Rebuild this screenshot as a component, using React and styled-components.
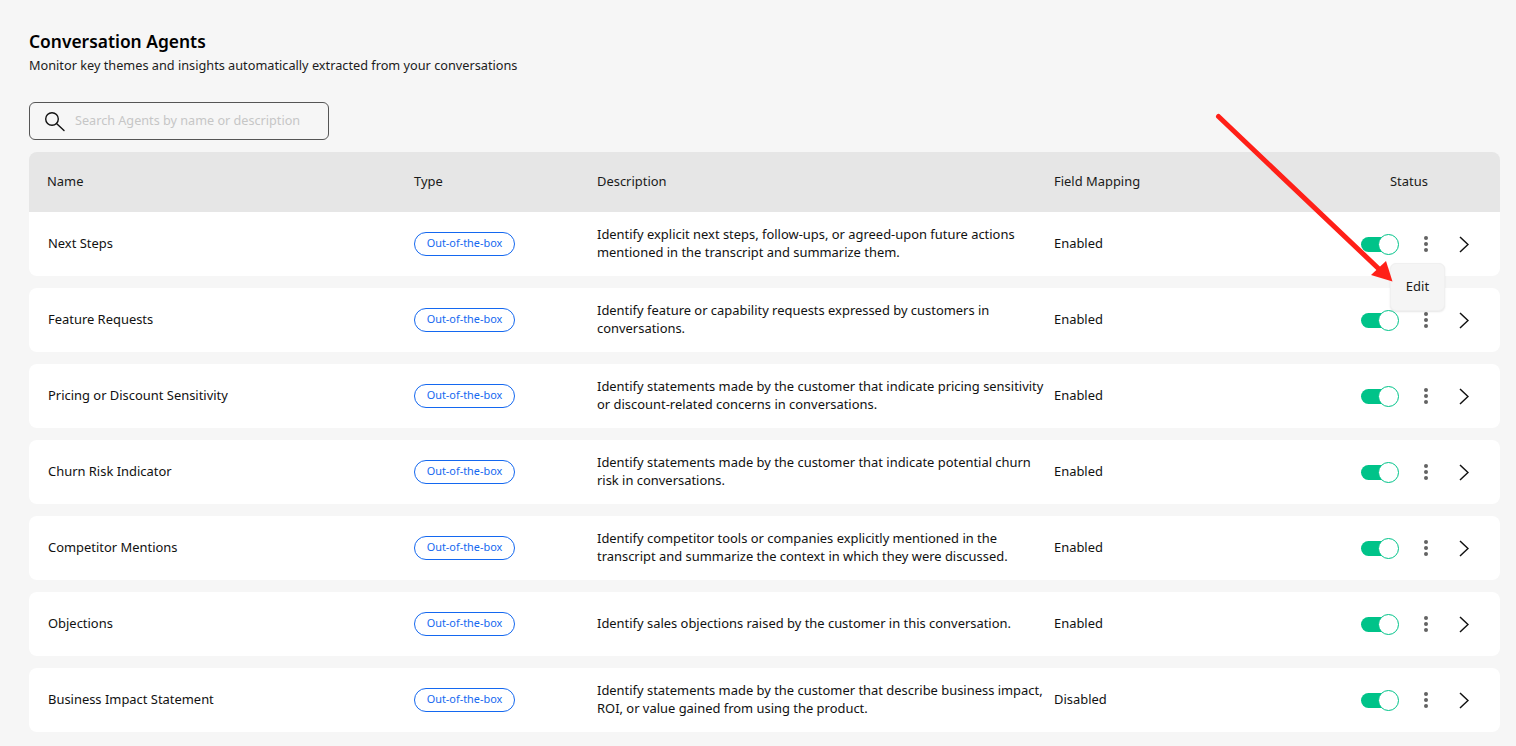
import React from 'react';
import styled, { createGlobalStyle } from 'styled-components';

const agents = [
  ['Next Steps', 'Identify explicit next steps, follow-ups, or agreed-upon future actions mentioned in the transcript and summarize them.', 'Enabled'],
  ['Feature Requests', 'Identify feature or capability requests expressed by customers in conversations.', 'Enabled'],
  ['Pricing or Discount Sensitivity', 'Identify statements made by the customer that indicate pricing sensitivity or discount-related concerns in conversations.', 'Enabled'],
  ['Churn Risk Indicator', 'Identify statements made by the customer that indicate potential churn risk in conversations.', 'Enabled'],
  ['Competitor Mentions', 'Identify competitor tools or companies explicitly mentioned in the transcript and summarize the context in which they were discussed.', 'Enabled'],
  ['Objections', 'Identify sales objections raised by the customer in this conversation.', 'Enabled'],
  ['Business Impact Statement', 'Identify statements made by the customer that describe business impact, ROI, or value gained from using the product.', 'Disabled'],
];

const GlobalStyle = createGlobalStyle`
  html, body {
    margin: 0;
    height: 100%;
    background: #f6f6f6;
  }
  body {
    font-family: 'Noto Sans', 'Liberation Sans', sans-serif;
    color: #111;
    overflow: hidden;
  }
`;

const Page = styled.div`
  position: relative;
  height: 746px;
  padding: 29px 16px 0 29px;
  box-sizing: border-box;
`;

const Title = styled.h1`
  margin: 0;
  font-size: 17.4px;
  line-height: 25px;
  font-weight: 600;
  color: #000;
`;

const Subtitle = styled.p`
  margin: 0;
  font-size: 12.72px;
  line-height: 22px;
  color: #1c1c1c;
`;

const SearchBox = styled.label`
  display: flex;
  align-items: center;
  gap: 10px;
  width: 300px;
  height: 38px;
  margin-top: 26px;
  padding-left: 15px;
  box-sizing: border-box;
  border: 1px solid #555;
  border-radius: 6px;
`;

const SearchInput = styled.input`
  flex: 1;
  min-width: 0;
  margin-bottom: 2px;
  border: none;
  outline: none;
  padding: 0;
  background: transparent;
  font-family: inherit;
  font-size: 12.65px;

  &::placeholder {
    color: #c6c6c6;
    opacity: 1;
  }
`;

const HeaderRow = styled.div`
  display: grid;
  grid-template-columns: 367px 183px 457px 336px auto;
  align-items: center;
  height: 60px;
  margin-top: 12px;
  padding: 0 0 2px 18px;
  box-sizing: border-box;
  background: #e6e6e6;
  border-radius: 8px 8px 0 0;
  font-size: 12.93px;
  color: #1a1a1a;
`;

const Rows = styled.div`
  display: flex;
  flex-direction: column;
  gap: 12px;
`;

const Row = styled.div`
  display: grid;
  grid-template-columns: 366px 183px 457px 307px auto;
  align-items: center;
  height: 64px;
  padding-left: 19px;
  background: #fff;
  border-radius: ${(p) => (p.$first ? '0 0 8px 8px' : '8px')};
  font-size: 12.93px;
  color: #111;
`;

const TextCell = styled.div`
  margin-bottom: 2px;
  line-height: 18px;
`;

const Badge = styled.span`
  justify-self: start;
  display: flex;
  align-items: center;
  justify-content: center;
  width: 101px;
  height: 24px;
  padding-bottom: 3px;
  box-sizing: border-box;
  border: 1px solid #1468f0;
  border-radius: 12px;
  font-size: 10.9px;
  color: #1468f0;
`;

const Actions = styled.div`
  display: flex;
  align-items: center;
`;

const Toggle = styled.span`
  position: relative;
  display: block;
  width: 37px;
  height: 15px;
  background: #00c389;
  border-radius: 8px;
`;

const Knob = styled.span`
  position: absolute;
  top: -3px;
  right: -1px;
  width: 21px;
  height: 21px;
  box-sizing: border-box;
  background: #fff;
  border: 1px solid #00c389;
  border-radius: 50%;
`;

const Dots = styled.span`
  display: flex;
  flex-direction: column;
  gap: 2.3px;
  margin: 0 31px 0 26px;
`;

const Dot = styled.i`
  display: block;
  width: 4px;
  height: 4px;
  background: #636363;
  border-radius: 50%;
`;

const Menu = styled.div`
  position: absolute;
  left: 1390px;
  top: 263px;
  display: flex;
  align-items: center;
  justify-content: center;
  width: 55px;
  height: 48px;
  padding-bottom: 2px;
  box-sizing: border-box;
  background: #f5f5f5;
  border: 1px solid #f0f0f0;
  border-radius: 6px;
  box-shadow: 0 1px 2px rgba(0, 0, 0, 0.1);
  font-size: 13px;
  color: #1c1c1c;
`;

const Annotation = styled.svg`
  position: absolute;
  left: 0;
  top: 0;
  pointer-events: none;
`;

function SearchIcon() {
  return (
    <svg width="20" height="21" viewBox="0 0 20 21" fill="none" stroke="#111" strokeWidth="1.4" strokeLinecap="round">
      <circle cx="7" cy="8" r="6.3" />
      <path d="M11.5 12.6 19 19.6" />
    </svg>
  );
}

function Chevron() {
  return (
    <svg width="10" height="17" viewBox="0 0 10 17" fill="none" stroke="#111" strokeWidth="1.5">
      <path d="M1 1 9 8.5 1 16" />
    </svg>
  );
}

function AgentRow({ name, description, mapping, first }) {
  return (
    <Row $first={first}>
      <TextCell>{name}</TextCell>
      <Badge>Out-of-the-box</Badge>
      <TextCell>{description}</TextCell>
      <TextCell>{mapping}</TextCell>
      <Actions>
        <Toggle>
          <Knob />
        </Toggle>
        <Dots>
          <Dot />
          <Dot />
          <Dot />
        </Dots>
        <Chevron />
      </Actions>
    </Row>
  );
}

export default function App() {
  return (
    <Page>
      <GlobalStyle />
      <Title>Conversation Agents</Title>
      <Subtitle>Monitor key themes and insights automatically extracted from your conversations</Subtitle>
      <SearchBox>
        <SearchIcon />
        <SearchInput placeholder="Search Agents by name or description" />
      </SearchBox>
      <HeaderRow>
        <div>Name</div>
        <div>Type</div>
        <div>Description</div>
        <div>Field Mapping</div>
        <div>Status</div>
      </HeaderRow>
      <Rows>
        {agents.map(([name, description, mapping], i) => (
          <AgentRow key={name} name={name} description={description} mapping={mapping} first={i === 0} />
        ))}
      </Rows>
      <Menu>Edit</Menu>
      <Annotation width="1516" height="746" viewBox="0 0 1516 746">
        <path d="M1218.5 116.5 1380 270" stroke="#ff2018" strokeWidth="5" strokeLinecap="round" fill="none" />
        <path d="M1392.5 281.5 1371 275 1386 261Z" fill="#ff2018" />
      </Annotation>
    </Page>
  );
}
